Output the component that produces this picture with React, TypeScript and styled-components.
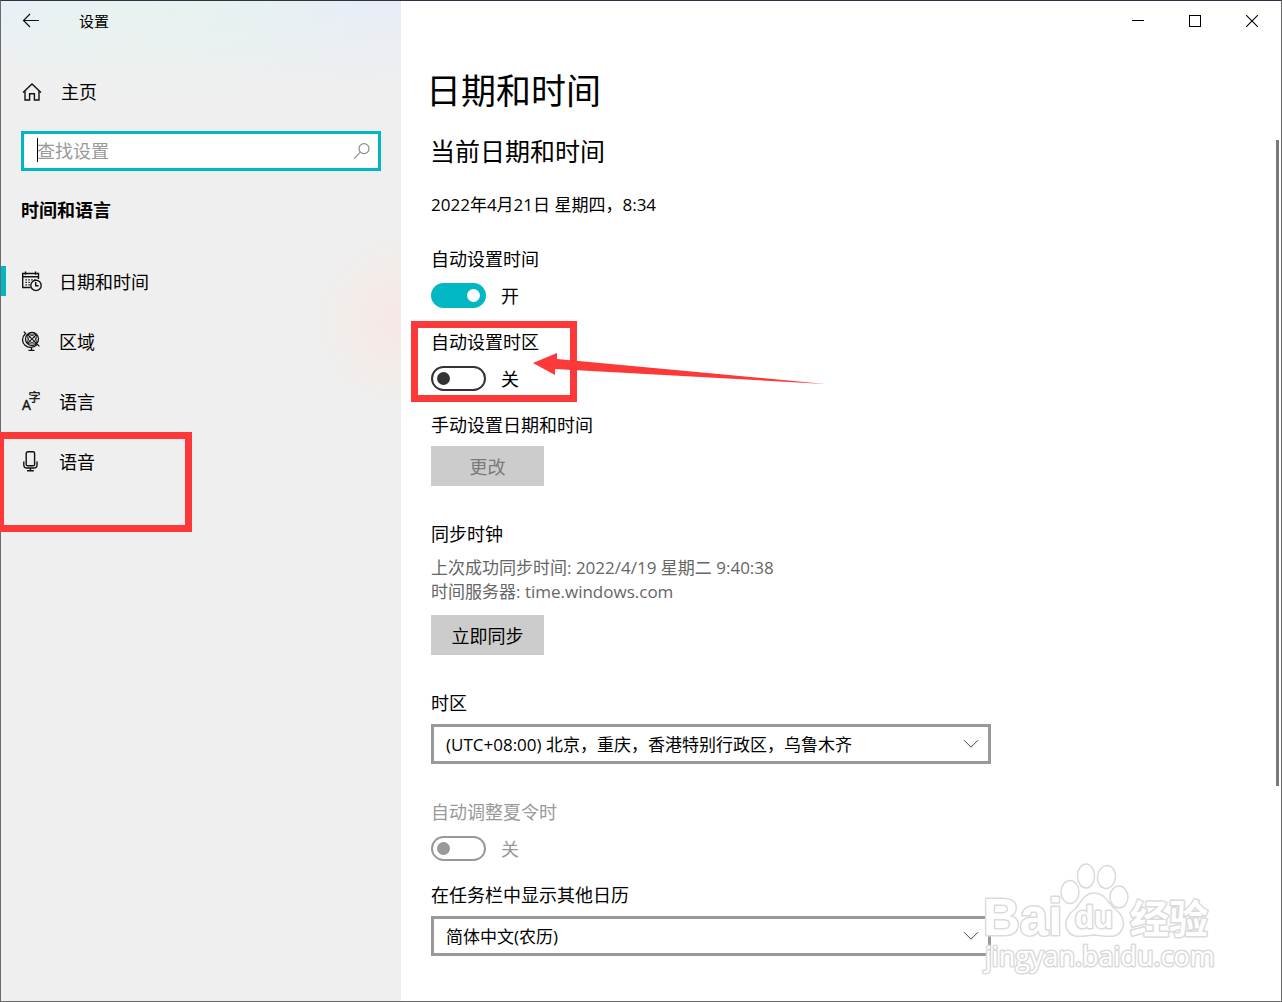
import React, { useState } from 'react';
import styled, { createGlobalStyle, css } from 'styled-components';

const ACCENT = '#00b7c3';
const MARK = '#fc3838';
const CJK = '"Noto Sans CJK SC", sans-serif';

const GlobalStyle = createGlobalStyle`
  * { box-sizing: border-box; }
  html { background: #ffffff; }
  body {
    margin: 0;
    color: #000000;
    font-family: "Open Sans", ${CJK};
    font-size: 17px;
    line-height: 24px;
  }
  h1, h2, p { margin: 0; }
  button, input, select { font: inherit; color: inherit; }
`;

const Window = styled.div`
  position: relative;
  display: flex;
  min-height: 100vh;
  border: 1px solid #6b6b6b;
  border-top-color: #2c3343;
  background: #ffffff;
`;

const Sidebar = styled.aside`
  flex: 0 0 400px;
  display: flex;
  flex-direction: column;
  background:
    radial-gradient(circle at 400px 320px, rgba(255, 218, 214, 0.4), rgba(255, 228, 216, 0.25) 50px, transparent 90px),
    radial-gradient(ellipse 240px 100px at 180px 0, rgba(228, 245, 240, 0.7), transparent),
    radial-gradient(ellipse 260px 90px at 350px 0, rgba(230, 235, 249, 0.8), transparent),
    radial-gradient(ellipse 160px 80px at 0 0, rgba(232, 240, 249, 0.9), transparent),
    #efefef;
`;

const TitleBar = styled.header`
  display: flex;
  align-items: center;
  gap: 38px;
  height: 40px;
  padding-left: 20px;
  font-size: 15px;
`;

const IconButton = styled.button`
  display: grid;
  place-items: center;
  width: 20px;
  height: 24px;
  padding: 0;
  border: 0;
  background: none;
`;

const HomeLink = styled.a`
  display: flex;
  align-items: center;
  gap: 18px;
  height: 40px;
  margin: 31px 20px 19px;
  color: inherit;
  font-size: 18px;
  text-decoration: none;
`;

const SearchBox = styled.label`
  position: relative;
  display: flex;
  align-items: center;
  height: 40px;
  margin: 0 20px;
  padding: 0 7px 0 13px;
  border: 3px solid ${ACCENT};
  background: #ffffff;
`;

const SearchInput = styled.input`
  flex: 1;
  min-width: 0;
  padding: 0;
  border: 0;
  outline: 0;
  background: none;
  font-size: 18px;
  &::placeholder { color: #999999; opacity: 1; }
`;

const Caret = styled.span`
  position: absolute;
  left: 13px;
  top: 4px;
  width: 1px;
  height: 24px;
  background: #000000;
`;

const SectionName = styled.h2`
  margin: 27px 20px 30px;
  font-size: 18px;
  font-weight: 700;
  line-height: 24px;
`;

const Nav = styled.nav`
  display: flex;
  flex-direction: column;
`;

const NavLink = styled.a<{ $active?: boolean }>`
  position: relative;
  display: flex;
  align-items: center;
  gap: 16px;
  height: 60px;
  padding-left: 15px;
  border-left: 5px solid transparent;
  color: inherit;
  font-size: 18px;
  text-decoration: none;
  ${(p) => p.$active && css`
    border-image: linear-gradient(transparent 14px, ${ACCENT} 14px, ${ACCENT} 44px, transparent 44px) 0 0 0 5;
  `}
`;

const NavMark = styled.span`
  position: absolute;
  left: -9px;
  top: 0;
  width: 195px;
  height: 100px;
  border: 7px solid ${MARK};
  clip-path: inset(0 0 0 3px);
`;

const Content = styled.main`
  flex: 1;
  min-width: 0;
  display: flex;
  flex-direction: column;
`;

const WindowButtons = styled.div`
  display: flex;
  justify-content: flex-end;
  height: 40px;
  padding-right: 1px;
`;

const WindowButton = styled.button`
  display: grid;
  place-items: center;
  width: 57px;
  height: 40px;
  padding: 0;
  border: 0;
  background: none;
`;

const Page = styled.div`
  display: flex;
  flex: 1;
`;

const Settings = styled.div`
  flex: 1;
  min-width: 0;
  padding: 26px 30px 45px;
`;

const Scrollbar = styled.div`
  width: 5px;
  padding: 99px 2px 0 0;
`;

const Thumb = styled.div`
  height: 75%;
  background: #7a7a7a;
`;

const PageTitle = styled.h1`
  margin-left: -5px;
  font-size: 35px;
  font-weight: 400;
  line-height: 48px;
`;

const SubTitle = styled.h2`
  margin: 20px 0 0 -1px;
  font-size: 25px;
  font-weight: 400;
  line-height: 32px;
`;

const Now = styled.p`
  margin: 26px 0 30px;
`;

const Field = styled.section<{ $space?: number; $muted?: boolean }>`
  position: relative;
  display: flex;
  flex-direction: column;
  align-items: flex-start;
  width: 100%;
  max-width: 560px;
  margin-bottom: ${(p) => p.$space ?? 22}px;
  color: ${(p) => (p.$muted ? '#999999' : '#000000')};
`;

const Caption = styled.label`
  font-size: 18px;
`;

const SwitchRow = styled.div`
  display: flex;
  align-items: center;
  gap: 15px;
  height: 25px;
  margin-top: 12px;
  font-size: 18px;
`;

const Switch = styled.input`
  appearance: none;
  display: flex;
  align-items: center;
  width: 55px;
  height: 25px;
  margin: 0;
  padding: 0 4px;
  border: 2px solid #333333;
  border-radius: 13px;
  background: #ffffff;
  &::before {
    content: '';
    width: 13px;
    height: 13px;
    border-radius: 50%;
    background: #333333;
  }
  &:checked { border-color: ${ACCENT}; background: ${ACCENT}; justify-content: flex-end; }
  &:checked::before { background: #ffffff; }
  &:disabled { border-color: #999999; }
  &:disabled::before { background: #999999; }
`;

const PushButton = styled.button<{ $top: number }>`
  width: 113px;
  height: 40px;
  margin-top: ${(p) => p.$top}px;
  padding: 2px 0 0;
  border: 0;
  background: #cccccc;
  font-size: 18px;
  &:disabled { color: #7a7a7a; }
`;

const Note = styled.p`
  margin-top: 10px;
  color: #666666;
`;

const SelectBox = styled.div`
  display: grid;
  align-items: center;
  width: 100%;
  margin-top: 9px;
  & > * { grid-area: 1 / 1; }
  & > svg { justify-self: end; margin-right: 12px; pointer-events: none; }
`;

const Select = styled.select`
  appearance: none;
  width: 100%;
  height: 40px;
  padding: 2px 40px 0 12px;
  border: 3px solid #999999;
  border-radius: 0;
  background: #ffffff;
`;

const FieldMark = styled.span`
  position: absolute;
  left: -20px;
  top: -9px;
  width: 166px;
  height: 81px;
  border: 7px solid ${MARK};
  pointer-events: none;
`;

const Arrow = styled.svg`
  position: absolute;
  left: 102px;
  top: 22px;
  pointer-events: none;
`;

const Watermark = styled.svg`
  position: absolute;
  right: 66px;
  bottom: 24px;
  pointer-events: none;
  & text { paint-order: stroke; stroke-width: 3px; stroke-linejoin: round; }
`;

const stroke = { fill: 'none', stroke: '#111', strokeWidth: 1.4 } as const;

const BackIcon = () => (
  <svg width="18" height="16" viewBox="0 0 18 16" {...stroke} strokeWidth={1.2}>
    <path d="M2 7.5H17M8 1L1.5 7.5L8 14" />
  </svg>
);

const HomeIcon = () => (
  <svg width="22" height="20" viewBox="0 0 22 20" {...stroke}>
    <path d="M2 10.6L11 2L20 10.6M4 9V18H8.6V11.8H13.4V18H18V9" />
  </svg>
);

const SearchIcon = () => (
  <svg width="18" height="18" viewBox="0 0 18 18" fill="none" stroke="#8c8c8c" strokeWidth="1.2">
    <circle cx="11" cy="6.6" r="5" />
    <path d="M7.4 10.2L1 16.6" />
  </svg>
);

const CalendarIcon = () => (
  <svg width="22" height="22" viewBox="0 0 22 22" {...stroke}>
    <path d="M9.5 16.5H1.7V2.5H17.5V8M1.7 5.8H17.5M4.5 .5V3.8M14.5 .5V3.8" />
    <path d="M4.4 8.9H15M4.4 11.4H10M4.4 13.9H9" strokeDasharray="1.5 1.4" />
    <circle cx="15" cy="14.4" r="5.2" />
    <path d="M14.7 11V14.7H17.6" />
  </svg>
);

const GlobeIcon = () => (
  <svg width="22" height="22" viewBox="0 0 22 22" {...stroke} strokeWidth={1.3}>
    <circle cx="11" cy="8" r="6.5" />
    <path d="M6.4 3.4L15.6 12.6M15.6 3.4L6.4 12.6" strokeWidth="1.1" />
    <path d="M6.4 3.4Q15.6 3 15.6 12.6M6.4 3.4Q6 12.6 15.6 12.6M15.6 3.4Q6.4 3 6.4 12.6M15.6 3.4Q16 12.6 6.4 12.6" strokeWidth=".8" />
    <path d="M2.8 .6L4.6 2.4C.4 6.2 .8 11.6 4 14.2C7.4 17.4 13 17 16.4 13.4L18.4 15.4M10.5 16.4V19M7.5 19.4H13.5" />
  </svg>
);

const LanguageIcon = () => (
  <svg width="22" height="22" viewBox="0 0 22 22" fill="#111" overflow="visible">
    <text x="1" y="19" fontSize="14" fontFamily="Open Sans, sans-serif" stroke="#111" strokeWidth=".4">A</text>
    <text x="7.5" y="11" fontSize="12" fontFamily="Noto Sans CJK SC, sans-serif" stroke="#111" strokeWidth=".3">字</text>
  </svg>
);

const MicIcon = () => (
  <svg width="22" height="22" viewBox="0 0 22 22" {...stroke}>
    <rect x="5.2" y=".8" width="8.4" height="14" rx="1.6" />
    <path d="M2.8 10.5V13.7Q2.8 17 6 17H12.8Q16 17 16 13.7V10.5M9.4 17V19.5M6 19.8H12.8" />
  </svg>
);

const ChevronIcon = () => (
  <svg width="16" height="10" viewBox="0 0 16 10" fill="none" stroke="#444" strokeWidth="1">
    <path d="M1 1.2L8 8.2L15 1.2" />
  </svg>
);

const BaiduMark = () => (
  <Watermark width="234" height="116" viewBox="0 0 234 116" fill="#ffffff" stroke="#dadada" strokeWidth="1.5">
    <g fontWeight="700">
      <text x="2" y="74" fontSize="51" fontFamily="Liberation Sans, sans-serif">Bai</text>
      <text x="149" y="72" fontSize="39" fontFamily="Noto Sans CJK SC, sans-serif">经验</text>
    </g>
    <ellipse cx="89" cy="31" rx="9" ry="11.5" />
    <ellipse cx="105" cy="15" rx="8.5" ry="12" />
    <ellipse cx="125.5" cy="16" rx="9" ry="11.5" transform="rotate(8 125.5 16)" />
    <ellipse cx="138" cy="36" rx="9" ry="11" />
    <path d="M113 32C124 32 127 42 134 48C142 54 145 63 140 70C135 78 125 75 113 74C101 75 92 78 87 70C82 63 86 54 94 48C100 42 103 32 113 32Z" />
    <text x="94" y="67" fontSize="31" fontFamily="Liberation Sans, sans-serif" fontWeight="700">du</text>
    <text x="4" y="105" fontSize="27" fontFamily="Open Sans, sans-serif">jingyan.baidu.com</text>
  </Watermark>
);

const navItems = [
  { name: '日期和时间', Icon: CalendarIcon, active: true },
  { name: '区域', Icon: GlobeIcon },
  { name: '语言', Icon: LanguageIcon },
  { name: '语音', Icon: MicIcon, marked: true },
];

type ToggleProps = {
  id: string;
  label: string;
  initial?: boolean;
  disabled?: boolean;
  children?: React.ReactNode;
};

function Toggle({ id, label, initial = false, disabled, children }: ToggleProps) {
  const [on, setOn] = useState(initial);
  return (
    <Field $muted={disabled}>
      <Caption htmlFor={id}>{label}</Caption>
      <SwitchRow>
        <Switch id={id} type="checkbox" role="switch" checked={on} disabled={disabled} onChange={() => setOn(!on)} />
        <span>{on ? '开' : '关'}</span>
      </SwitchRow>
      {children}
    </Field>
  );
}

function Dropdown({ id, label, value, space }: { id: string; label: string; value: string; space: number }) {
  return (
    <Field $space={space}>
      <Caption htmlFor={id}>{label}</Caption>
      <SelectBox>
        <Select id={id} defaultValue={value}>
          <option>{value}</option>
        </Select>
        <ChevronIcon />
      </SelectBox>
    </Field>
  );
}

export default function App() {
  return (
    <>
      <GlobalStyle />
      <Window>
        <Sidebar>
          <TitleBar>
            <IconButton aria-label="返回"><BackIcon /></IconButton>
            <span>设置</span>
          </TitleBar>
          <HomeLink href="#home"><HomeIcon />主页</HomeLink>
          <SearchBox>
            <Caret />
            <SearchInput type="text" placeholder="查找设置" aria-label="查找设置" />
            <SearchIcon />
          </SearchBox>
          <SectionName>时间和语言</SectionName>
          <Nav>
            {navItems.map(({ name, Icon, active, marked }) => (
              <NavLink key={name} href={`#${name}`} $active={active}>
                <Icon />
                {name}
                {marked && <NavMark />}
              </NavLink>
            ))}
          </Nav>
        </Sidebar>

        <Content>
          <WindowButtons>
            <WindowButton aria-label="最小化">
              <svg width="12" height="12" viewBox="0 0 12 12"><path d="M0 5.5H12" stroke="#000" /></svg>
            </WindowButton>
            <WindowButton aria-label="最大化">
              <svg width="12" height="12" viewBox="0 0 12 12"><rect x=".5" y=".5" width="11" height="11" fill="none" stroke="#000" /></svg>
            </WindowButton>
            <WindowButton aria-label="关闭">
              <svg width="12" height="12" viewBox="0 0 12 12"><path d="M0 0L12 12M12 0L0 12" stroke="#000" strokeWidth="1.1" /></svg>
            </WindowButton>
          </WindowButtons>
          <Page>
            <Settings>
              <PageTitle>日期和时间</PageTitle>
              <SubTitle>当前日期和时间</SubTitle>
              <Now>2022年4月21日 星期四，8:34</Now>

              <Toggle id="auto-time" label="自动设置时间" initial />
              <Toggle id="auto-zone" label="自动设置时区">
                <FieldMark />
                <Arrow width="294" height="34" viewBox="0 0 294 34" fill={MARK}>
                  <path d="M0 11L24 1V7L292 32L22 17L22 23Z" />
                </Arrow>
              </Toggle>

              <Field $space={36}>
                <Caption as="span">手动设置日期和时间</Caption>
                <PushButton $top={9} disabled>更改</PushButton>
              </Field>

              <Field $space={36}>
                <Caption as="span">同步时钟</Caption>
                <Note>
                  上次成功同步时间: 2022/4/19 星期二 9:40:38
                  <br />
                  时间服务器: time.windows.com
                </Note>
                <PushButton $top={11}>立即同步</PushButton>
              </Field>

              <Dropdown id="zone" label="时区" value="(UTC+08:00) 北京，重庆，香港特别行政区，乌鲁木齐" space={36} />
              <Toggle id="dst" label="自动调整夏令时" disabled />
              <Dropdown id="calendar" label="在任务栏中显示其他日历" value="简体中文(农历)" space={0} />
            </Settings>
            <Scrollbar><Thumb /></Scrollbar>
          </Page>
        </Content>
        <BaiduMark />
      </Window>
    </>
  );
}
